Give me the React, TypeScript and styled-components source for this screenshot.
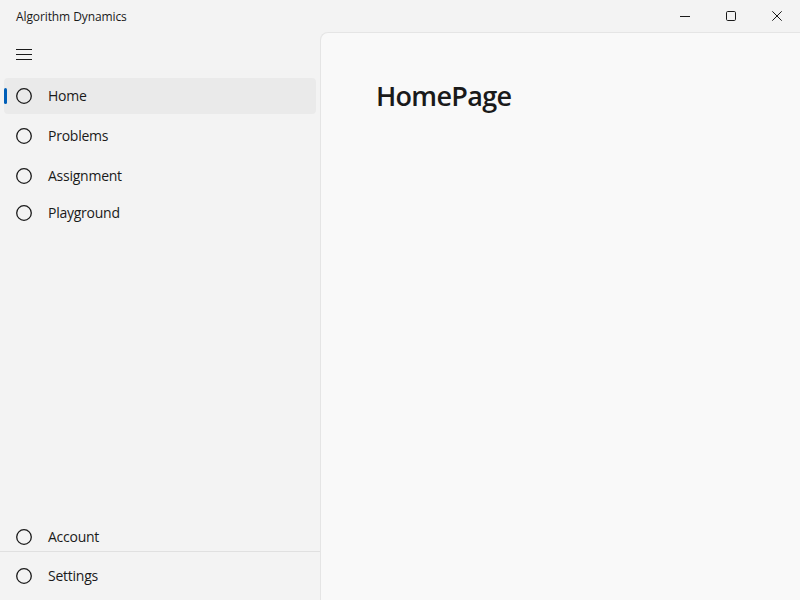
import React from "react";
import styled, { createGlobalStyle } from "styled-components";

const GlobalStyle = createGlobalStyle`
  html, body {
    margin: 0;
    padding: 0;
  }
  body {
    font-family: "Segoe UI", "Open Sans", "Noto Sans", sans-serif;
    color: #1a1a1a;
  }
`;

const CircleIcon = () => (
  <svg width="16" height="16" viewBox="0 0 16 16">
    <circle cx="8" cy="8" r="7.3" fill="none" stroke="#1a1a1a" strokeWidth="1.3" />
  </svg>
);

const navTop = [
  { label: "Home", selected: true, space: 0 },
  { label: "Problems", selected: false, space: 4 },
  { label: "Assignment", selected: false, space: 4 },
  { label: "Playground", selected: false, space: 1 },
];

export default function App() {
  return (
    <Window>
      <GlobalStyle />
      <TitleBar>
        <AppTitle>Algorithm Dynamics</AppTitle>
        <Controls>
          <CtrlButton aria-label="minimize">
            <svg width="10" height="10" viewBox="0 0 10 10">
              <line x1="0" y1="5.5" x2="10" y2="5.5" stroke="#1a1a1a" strokeWidth="1" />
            </svg>
          </CtrlButton>
          <CtrlButton aria-label="maximize">
            <svg width="10" height="10" viewBox="0 0 10 10">
              <rect x="0.5" y="0.5" width="9" height="9" rx="1.2" fill="none" stroke="#1a1a1a" strokeWidth="1" />
            </svg>
          </CtrlButton>
          <CtrlButton aria-label="close">
            <svg width="10" height="10" viewBox="0 0 10 10">
              <path d="M0.3 0.3 L9.7 9.7 M9.7 0.3 L0.3 9.7" stroke="#1a1a1a" strokeWidth="1" />
            </svg>
          </CtrlButton>
        </Controls>
      </TitleBar>
      <Body>
        <Sidebar>
          <Hamburger>
            <svg width="16" height="12" viewBox="0 0 16 12">
              <path d="M0 1.5 H16 M0 6.5 H16 M0 11.5 H16" stroke="#1a1a1a" strokeWidth="1" />
            </svg>
          </Hamburger>
          <NavList>
            {navTop.map((item) => (
              <NavItem key={item.label} $selected={item.selected} $space={item.space}>
                {item.selected && <Indicator />}
                <CircleIcon />
                <NavLabel>{item.label}</NavLabel>
              </NavItem>
            ))}
          </NavList>
          <Footer>
            <NavItem $selected={false} $space={0} $short>
              <CircleIcon />
              <NavLabel>Account</NavLabel>
            </NavItem>
            <Separator />
            <NavItem $selected={false} $space={0}>
              <CircleIcon />
              <NavLabel>Settings</NavLabel>
            </NavItem>
          </Footer>
        </Sidebar>
        <ContentPanel>
          <PageTitle>HomePage</PageTitle>
        </ContentPanel>
      </Body>
    </Window>
  );
}

const Window = styled.div`
  width: 800px;
  height: 600px;
  background: #f3f3f3;
  display: flex;
  flex-direction: column;
  overflow: hidden;
`;

const TitleBar = styled.div`
  height: 32px;
  display: flex;
  align-items: center;
  justify-content: space-between;
  flex-shrink: 0;
`;

const AppTitle = styled.div`
  font-size: 12px;
  padding-left: 16px;
  letter-spacing: -0.1px;
  color: #1a1a1a;
`;

const Controls = styled.div`
  display: flex;
  height: 100%;
`;

const CtrlButton = styled.div`
  width: 46px;
  height: 32px;
  display: flex;
  align-items: center;
  justify-content: center;
`;

const Body = styled.div`
  flex: 1;
  display: flex;
  min-height: 0;
`;

const Sidebar = styled.nav`
  width: 320px;
  flex-shrink: 0;
  display: flex;
  flex-direction: column;
`;

const Hamburger = styled.div`
  height: 36px;
  margin: 4px 4px 6px;
  padding-left: 12px;
  display: flex;
  align-items: center;
`;

const NavList = styled.div`
  display: flex;
  flex-direction: column;
  flex: 1;
`;

const NavItem = styled.div<{ $selected: boolean; $space: number; $short?: boolean }>`
  position: relative;
  height: ${(p) => (p.$short ? "28px" : "36px")};
  margin: ${(p) => p.$space}px 4px 0;
  padding-left: 12px;
  border-radius: 4px;
  display: flex;
  align-items: center;
  gap: 16px;
  background: ${(p) => (p.$selected ? "#eaeaea" : "transparent")};
`;

const Indicator = styled.span`
  position: absolute;
  left: 0;
  top: 10px;
  width: 3px;
  height: 16px;
  border-radius: 2px;
  background: #005fb8;
`;

const NavLabel = styled.span`
  font-size: 14px;
  line-height: 18px;
  letter-spacing: -0.25px;
  color: #1a1a1a;
`;

const Footer = styled.div`
  display: flex;
  flex-direction: column;
  padding-bottom: 6px;
`;

const Separator = styled.div`
  height: 1px;
  background: #e0e0e0;
  margin-bottom: 6px;
`;

const ContentPanel = styled.main`
  flex: 1;
  background: #f9f9f9;
  border-top: 1px solid #e5e5e5;
  border-left: 1px solid #e5e5e5;
  border-top-left-radius: 8px;
  padding: 43px 0 0 55px;
`;

const PageTitle = styled.h1`
  margin: 0;
  font-size: 27px;
  font-weight: 600;
  line-height: 40px;
  letter-spacing: -0.7px;
  color: #1a1a1a;
`;
